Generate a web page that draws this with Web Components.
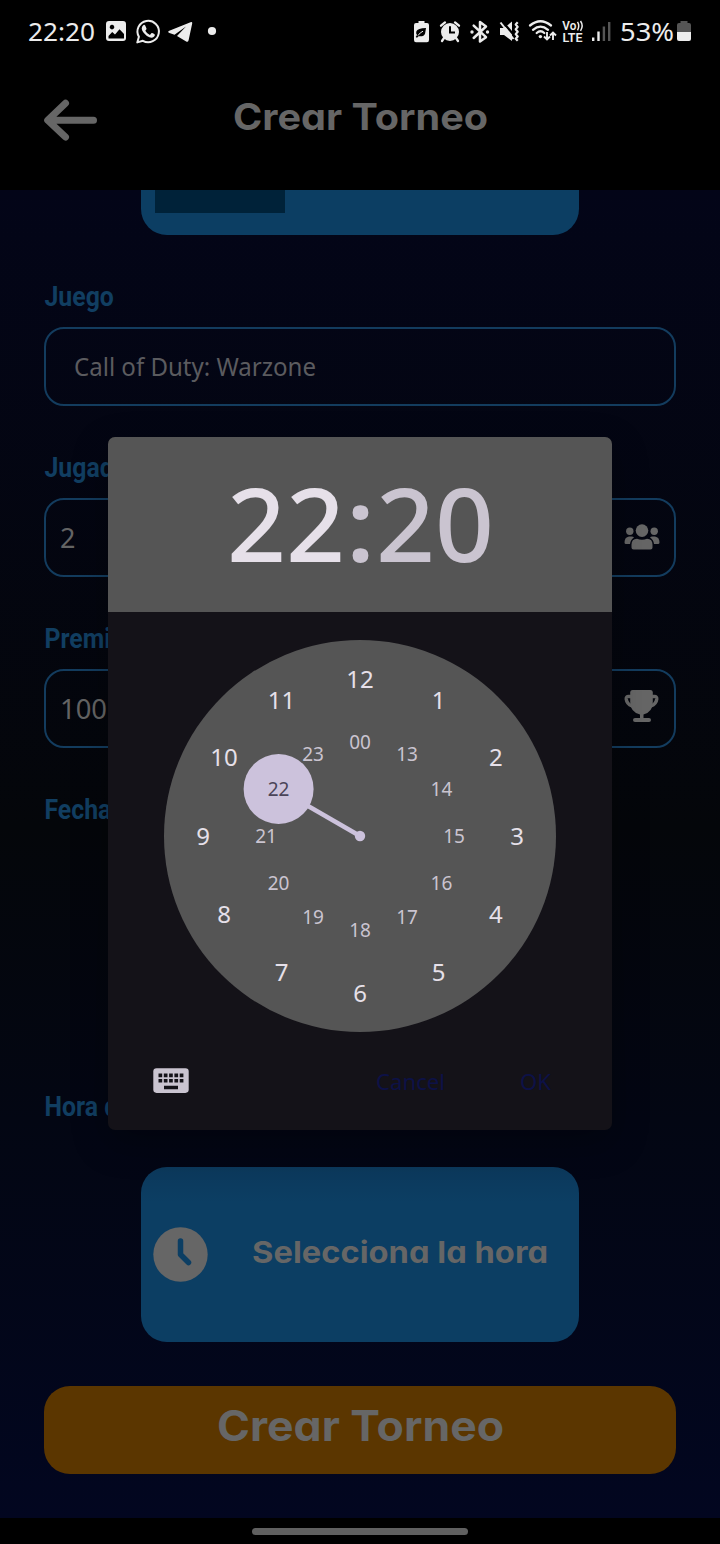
<!DOCTYPE html>
<html lang="es">
<head>
<meta charset="utf-8">
<title>Crear Torneo</title>
<style>
html,body{margin:0;background:#000}
body{width:720px;height:1544px;overflow:hidden;font-family:"Noto Sans",sans-serif}
</style>
</head>
<body>
<tournament-app></tournament-app>
<script>
const define=(name,html,ready)=>customElements.define(name,class extends HTMLElement{
  connectedCallback(){
    if(this.shadowRoot)return;
    const t=document.createElement('template');
    t.innerHTML=html;
    this.attachShadow({mode:'open'}).append(t.content.cloneNode(true));
    if(ready)ready(this,this.shadowRoot);
  }
});

/* Text squeezed or stretched to a given advance width */
define('fit-text',`<style>
:host{display:block;white-space:nowrap;flex:none}
span{display:inline-block;transform-origin:0 50%}
</style><span><slot></slot></span>`,(el,root)=>{
  const s=root.querySelector('span');
  const w=+el.getAttribute('w');
  s.style.transform='scaleX('+w/s.getBoundingClientRect().width+')';
  el.style.width=w+'px';
});

define('status-bar',`<style>
:host{display:flex;height:61px;align-items:center;justify-content:space-between;padding:0 28px 0 28px;box-sizing:border-box;font-size:25px;line-height:34px;color:#ececec;background:#000}
div{display:flex;align-items:center}
svg{display:block;flex:none;overflow:visible}
</style>
<div><fit-text w="67">22:20</fit-text>
<svg width="125" height="30" viewBox="95 16 125 30" fill="#ececec">
<path fill-rule="evenodd" d="M109 21h14q3 0 3 3v14q0 3-3 3h-14q-3 0-3-3V24q0-3 3-3zm3 3.800a2.300 2.300 0 1 0 .01 0zM108.500 38.500h15.500v-4.500l-4.500-4.800-4.500 5.300-2.800-2.500-3.700 4z"/>
<path d="M137.300 42.400l1.600-5.600a10.700 10.700 0 1 1 4 4z" fill="none" stroke="#ececec" stroke-width="2" stroke-linejoin="round"/>
<path d="M143.200 25.200q1.200-.8 2 .3l1.300 3q.2.700-1.200 2.200 1.600 3 4.600 4.200l1.700-1.800q.6-.4 3.200 1.300.5 1.200-1.200 2.700-2.500 1.700-6.700-1.200-4.700-3.500-5.200-7.300 0-2.100 1.500-3.400z"/>
<path d="M169.300 30.800Q167 32 169.500 33L174.500 34.700 186 26.400 177 36 186.200 41.500Q188 42.300 188.600 40.200L192.200 23.500Q192.500 21.600 190.500 22.200z"/>
<circle cx="212" cy="31" r="4.100"/>
</svg></div>
<div><svg width="210" height="34" viewBox="410 14 210 34" fill="#ececec">
<path fill-rule="evenodd" d="M418.500 21h6v2h2.500q2 0 2 2v15q0 2.300-2 2.300h-11q-2 0-2-2.300V25q0-2 2-2h2.500zM426 28q-8.500.3-9.600 3.300-.8 2 .6 3.600l-1.300 2 1.300.8 1.500-1.500q5.500.7 6.600-2.800.5-2.700.9-5.400z"/>
<path d="M418 35.500q2-3 5-4.300" stroke="#ececec" fill="none"/>
<circle cx="450" cy="32" r="9"/><path d="M441 25.700l4-3.300M459 25.700l-4-3.300M444 38l-2 3M456 38l2 3" stroke="#ececec" stroke-width="2.300" stroke-linecap="round"/><path d="M450 26.300v6.300h5" fill="none" stroke="#000" stroke-width="2"/>
<path d="M473.700 25.700l12.300 11.500-6 4.300V22l6 4.500-12.300 11.500" fill="none" stroke="#ececec" stroke-width="2.500" stroke-linejoin="round" stroke-linecap="round"/><circle cx="472" cy="32" r="1.700"/><circle cx="487.500" cy="32" r="1.700"/>
<path d="M500 28h4l8-6.500v19.500l-8-6h-4z"/><path d="M499.500 21l15 18" stroke="#000" stroke-width="2.200" transform="translate(1.600 -1.200)"/><path d="M500.500 22.500l13 16.500" stroke="#ececec" stroke-width="2"/><path d="M517.700 22.300l-2 2.200 2 2.400-2 2.400 2 2.400-2 2.400 2 2.400-2 2.300 2 2" fill="none" stroke="#ececec" stroke-width="2.200" stroke-linejoin="round"/>
<g fill="none" stroke="#ececec" stroke-width="2.300" stroke-linecap="round"><path d="M530 25.500q10.500-8.500 21 0M533 29.800q7.500-6.300 15 0M536.700 33q3.800-3.400 7.600 0"/></g><circle cx="540.400" cy="36.600" r="1.700"/>
<path d="M547 32v7.500m-3-3l3 3 3-3M553 40v-7.500m-3 3l3-3 3 3" fill="none" stroke="#ececec" stroke-width="1.900"/>
<g font-family="Roboto" font-size="12" font-weight="600"><text x="562.300" y="30" textLength="14" lengthAdjust="spacingAndGlyphs">Vo</text><text x="562.500" y="42" textLength="20" lengthAdjust="spacingAndGlyphs">LTE</text></g>
<path d="M577.500 21.800q2.500 4 0 8.500M580.500 21q3.300 4.800 0 9.800" fill="none" stroke="#ececec" stroke-width="1.500"/>
<path d="M592 37.500h2.400v3.500H592zM597.300 31.500h2.400V41h-2.400z"/><path fill="#555" d="M602.700 26.500h2.400V41h-2.400zM608 22h2.400v19H608z"/>
</svg><fit-text w="54">53%</fit-text>
<svg style="margin-left:3px;margin-right:1px" width="14" height="20" viewBox="0 0 14 20"><path fill="#555" d="M3.500 0h7v2h1.500q2 0 2 2v7H0V4q0-2 2-2h1.500z"/><path fill="#ececec" d="M0 11h14v7q0 2-2 2H2q-2 0-2-2z"/></svg></div>`);

define('app-header',`<style>
:host{display:grid;grid-template-columns:190px 1fr 190px;align-items:center;height:129px;background:#000;color:#666;box-sizing:border-box;padding-bottom:18px}
svg{display:block;margin-left:43px;margin-top:7px}
div{display:flex;justify-content:center;font:700 37px/46px Inter,sans-serif;font-feature-settings:"cv11","ss03"}
</style><svg width="56" height="44" viewBox="0 0 56 44"><path d="M22.500 5.200L4.700 22.300l17.800 16.700M6 22.300h44.500" fill="none" stroke="#666" stroke-width="7" stroke-linecap="round" stroke-linejoin="round"/></svg>
<div><fit-text w="255"><slot></slot></fit-text></div>`);

define('form-field',`<style>
:host{display:flex;flex-direction:column;gap:15px}
label{display:block;font:700 27px/30px Roboto,sans-serif;color:#113e61;transform:scaleX(.92);transform-origin:0 50%;white-space:nowrap;padding-left:.5px}
.box{display:flex;align-items:center;justify-content:space-between;height:79px;box-sizing:border-box;border:2px solid #133c5e;border-radius:20px;font-size:27px;line-height:36px;color:#646464;padding:0 14px 0 14px}
:host([bare]) .box{display:none}
:host([wide]) .box{font-size:25px;line-height:34px;padding-left:28px;padding-bottom:1px;color:#5b5b5f}
</style><label></label><div class="box"><slot></slot><slot name="icon"></slot></div>`,(el,root)=>{
  root.querySelector('label').textContent=el.getAttribute('label');
});

define('action-button',`<style>
:host{display:flex;align-items:center;box-sizing:border-box;border-radius:26px;color:#666;font:700 30px/40px Inter,sans-serif;font-feature-settings:"cv11","ss03"}
:host([kind=time]){width:438px;height:175px;align-self:center;background:linear-gradient(#0c385b,#0c3e63 35px);padding-left:12px;gap:44px}
:host([kind=submit]){height:88px;background:#5b3600;justify-content:center;padding-bottom:8px;font-size:42px}
</style><slot></slot>`);

define('time-dial',`<style>:host{display:block;width:392px;height:392px}svg{display:block}</style>
<svg width="392" height="392" viewBox="0 0 392 392" text-anchor="middle" font-family="Noto Sans"><circle cx="196" cy="196" r="196" fill="#555"/><path d="M196 196L114.600 149" stroke="#ccc2dc" stroke-width="4.500"/><circle cx="196" cy="196" r="5.200" fill="#ccc2dc"/><circle cx="114.600" cy="149" r="35" fill="#ccc2dc"/></svg>`,(el,root)=>{
  const svg=root.querySelector('svg');
  const ring=(list,radius,size,weight,fill)=>list.forEach((label,i)=>{
    const a=i*Math.PI/6,t=document.createElementNS('http://www.w3.org/2000/svg','text');
    t.setAttribute('x',196+radius*Math.sin(a));
    t.setAttribute('y',196-radius*Math.cos(a)+size*.357);
    t.setAttribute('font-size',size);
    t.setAttribute('font-weight',weight);
    t.setAttribute('fill',label==='22'?'#4a4458':fill);
    t.textContent=label;
    svg.append(t);
  });
  ring(['12','1','2','3','4','5','6','7','8','9','10','11'],157,24,440,'#e6e0e9');
  ring(['00','13','14','15','16','17','18','19','20','21','22','23'],94,19,400,'#cac4d0');
});

define('time-dialog',`<style>
:host{display:flex;flex-direction:column;width:504px;height:693px;border-radius:7px;overflow:hidden;background:#141218;box-shadow:0 12px 36px #0004}
header{display:flex;justify-content:center;height:175px;background:#555;color:#cac4d0;font-size:102px;line-height:171px;font-weight:460}
header b{font-weight:460;color:#e6e0e9}
main{display:flex;justify-content:center;padding-top:28px}
footer{display:flex;align-items:center;height:98px;padding:0 62px 0 45px;font-size:22.500px;line-height:30px;color:#0d1147;font-weight:400}
footer svg{margin-right:187px;margin-top:-1px;flex:none}
footer fit-text{margin-top:2px}
.ok{margin-left:75px}
</style>
<header><fit-text w="118"><b>22</b></fit-text><fit-text w="31">:</fit-text><fit-text w="118">20</fit-text></header>
<main><time-dial></time-dial></main>
<footer><svg width="36" height="25" viewBox="0 0 36 25"><rect x=".3" y=".3" width="35.400" height="24.600" rx="3.300" fill="#cac4d0"/><path d="M5.500 7.400h25M5.500 12.700h25" stroke="#141218" stroke-width="3.600" stroke-dasharray="3.700 1.600"/><path d="M11 19.500h14" stroke="#141218" stroke-width="3.500"/></svg>
<fit-text w="69">Cancel</fit-text><fit-text class="ok" w="31">OK</fit-text></footer>`);

define('tournament-form',`<style>
:host{display:flex;flex-direction:column;height:1328px;box-sizing:border-box;padding:0 44px;background:linear-gradient(#030518,#04060a 48%,#030613 70%,#020620)}
.date{align-self:center;width:438px;height:45px;box-sizing:border-box;background:#0c3e63;border-radius:0 0 26px 26px;padding-left:14px;flex:none}
.date i{display:block;width:130px;height:23px;background:#002239}
.fields{display:flex;flex-direction:column;gap:47px;margin-top:47px}
.hour{margin-top:267px}
.pick{margin-top:45px;flex:none}
.submit{margin-top:44px;flex:none}
svg{display:block;flex:none}
.cap{margin-top:-5px}
.people{margin-top:-1px}
</style>
<div class="date"><i></i></div>
<div class="fields">
<form-field label="Juego" wide><fit-text w="242">Call of Duty: Warzone</fit-text></form-field>
<form-field label="Jugadores">2<svg slot="icon" class="people" width="36" height="26" viewBox="0 0 36 26" fill="#666"><circle cx="18" cy="6.600" r="6.300"/><circle cx="5.800" cy="7.300" r="3.700"/><circle cx="30.200" cy="7.300" r="3.700"/><path d="M7.500 23.500v-3q0-5.500 5.500-5.800 5 2 10 0 5.500.3 5.500 5.800v3q0 2-2 2h-17q-2 0-2-2zM2 20Q.5 20 .5 18.500q0-5.300 4.500-6h2.500q1.800.2 2.500 1-3.500 2-4 6.500zM34 20q1.500 0 1.500-1.500 0-5.300-4.500-6h-2.500q-1.800.2-2.500 1 3.500 2 4 6.500z"/></svg></form-field>
<form-field label="Premio"><fit-text w="47">100</fit-text><svg slot="icon" class="cap" width="36" height="34" viewBox="0 0 36 34"><path d="M7.500 7.500H4.500Q2 7.500 2.200 10q.6 5 5.800 7M27.500 7.500h3q2.500 0 2.300 2.500-.6 5-5.800 7" fill="none" stroke="#666" stroke-width="3.400" stroke-linejoin="round"/><path fill="#666" d="M8.500 1h18q2 0 2.300 2v10q0 10-9.300 12.500V29H25q2 0 2 2t-2 2H11q-2 0-2-2t2-2h5v-3.500Q6.200 23 6.200 13V3q.3-2 2.300-2z"/></svg></form-field>
<form-field label="Fecha inicio" bare></form-field>
</div>
<form-field class="hour" label="Hora de inicio" bare></form-field>
<action-button class="pick" kind="time"><svg width="55" height="55" viewBox="0 0 55 55"><circle cx="27.500" cy="27.500" r="27.200" fill="#666"/><path d="M27.500 14v13.500l8 8" fill="none" stroke="#0c3e63" stroke-width="5.500" stroke-linecap="round" stroke-linejoin="round"/></svg><fit-text w="296" style="margin-top:-5px">Selecciona la hora</fit-text></action-button>
<action-button class="submit" kind="submit"><fit-text w="287">Crear Torneo</fit-text></action-button>`);

define('gesture-bar',`<style>:host{display:flex;height:26px;background:#000;justify-content:center;align-items:center;box-sizing:border-box;padding-top:1px}i{display:block;width:216px;height:7px;border-radius:4px;background:#606060}</style><i></i>`);

define('tournament-app',`<style>:host{display:flex;flex-direction:column;position:relative;width:720px;height:1544px;overflow:hidden}
time-dialog{position:absolute;left:108px;top:437px}</style>
<status-bar></status-bar><app-header>Crear Torneo</app-header><tournament-form></tournament-form><gesture-bar></gesture-bar><time-dialog></time-dialog>`);
</script>
</body>
</html>
